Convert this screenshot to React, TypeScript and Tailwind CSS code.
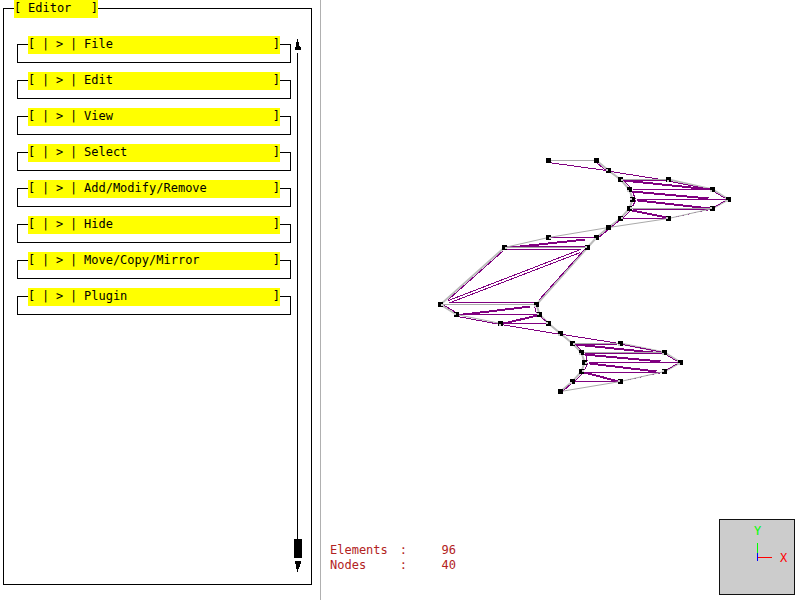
import React from "react";

const MENUS = [
  "File",
  "Edit",
  "View",
  "Select",
  "Add/Modify/Remove",
  "Hide",
  "Move/Copy/Mirror",
  "Plugin",
];

const STATS = [
  { label: "Elements", value: 96 },
  { label: "Nodes", value: 40 },
];

type Segment = [number, number, number, number];

// Node position, followed by the corner that an outline covers
type MeshNode = [number, number, ("nw" | "ne" | "sw" | "se" | "s")?];

const NODES: MeshNode[] = [
  [548, 160], [596, 160], [608, 170, "nw"], [620, 179, "se"], [668, 179, "s"],
  [629, 189, "sw"], [712, 189, "sw"], [632, 199, "nw"], [728, 199, "sw"],
  [629, 208, "ne"], [712, 208, "nw"], [620, 218, "ne"], [668, 218, "nw"],
  [608, 227], [548, 237, "se"], [596, 237, "sw"], [504, 247, "se"],
  [587, 247, "nw"], [440, 304, "se"], [536, 304, "sw"], [456, 314, "nw"],
  [539, 314, "nw"], [500, 323, "s"], [548, 323, "nw"], [560, 333, "sw"],
  [572, 343, "se"], [620, 343, "sw"], [581, 352, "sw"], [664, 352, "sw"],
  [584, 362, "se"], [680, 362, "sw"], [581, 371, "ne"], [664, 371, "nw"],
  [572, 381, "sw"], [620, 381, "nw"], [560, 391],
];

const NOTCH = {
  nw: [-2, -1],
  ne: [1, -1],
  sw: [-2, 1],
  se: [1, 0],
  s: [-1, 1],
};

const EDGES: Segment[] = [
  [548, 162, 606, 170], [597, 163, 608, 172], [610, 171, 667, 180],
  [670, 181, 710, 189], [623, 180, 664, 180], [632, 189, 712, 189],
  [636, 199, 725, 199], [632, 209, 710, 209], [622, 218, 665, 218],
  [624, 181, 631, 188], [632, 191, 635, 199], [635, 200, 632, 206],
  [630, 210, 622, 218], [619, 220, 610, 227], [608, 229, 598, 237],
  [715, 192, 725, 198], [725, 200, 715, 206],
  [548, 237, 594, 237], [506, 246, 585, 246], [506, 249, 580, 249],
  [503, 250, 448, 299], [448, 300, 580, 249], [450, 302, 580, 252],
  [584, 249, 538, 300], [448, 302, 535, 302], [457, 314, 537, 314],
  [500, 323, 547, 323], [444, 305, 457, 313], [457, 316, 500, 324],
  [500, 324, 560, 334], [534, 306, 536, 313], [541, 317, 547, 322],
  [562, 334, 619, 343], [622, 344, 663, 352], [575, 344, 616, 344],
  [584, 353, 662, 353], [588, 362, 677, 362], [584, 372, 660, 372],
  [574, 381, 617, 381], [576, 345, 583, 352], [585, 354, 587, 361],
  [587, 363, 584, 370], [582, 373, 574, 381], [571, 383, 562, 391],
  [667, 355, 677, 361], [677, 363, 667, 369],
];

const DIAGONALS: Segment[] = [
  [623, 180, 710, 189], [632, 191, 708, 198], [637, 200, 709, 208],
  [632, 210, 666, 217], [510, 247, 585, 239], [463, 314, 530, 306],
  [503, 323, 537, 315], [575, 344, 662, 353], [584, 354, 660, 361],
  [589, 363, 656, 371], [584, 372, 618, 381],
];

const HIDDEN: Segment[] = [[676, 216, 712, 209], [628, 379, 664, 372]];

const THICK_OUTLINES = [
  "596,160 608,170 620,179 629,189 632,199 629,208 620,218 608,227 596,237 587,247 536,304 539,314 548,323 560,333 572,343 581,352 584,362 581,371 572,381 560,391",
  "668,179 712,189 728,199 712,208",
  "504,247 440,304 456,314",
  "620,343 664,352 680,362 664,371",
];

const THIN_OUTLINES = [
  "548,160 596,160",
  "620,179 668,179",
  "712,208 668,218 608,227 548,237 504,247",
  "456,314 500,323",
  "504,247 587,247",
  "440,304 536,304",
  "572,343 620,343",
  "664,371 620,381 560,391",
  "629,208 712,208",
  "581,352 664,352",
];

function Lines({ segments }: { segments: Segment[] }) {
  return (
    <>
      {segments.map(([x1, y1, x2, y2]) => (
        <line key={`${x1},${y1},${x2},${y2}`} x1={x1} y1={y1} x2={x2} y2={y2} />
      ))}
    </>
  );
}

function Mesh() {
  return (
    <svg
      viewBox="430 150 310 250"
      width="310"
      height="250"
      role="img"
      aria-label="Mesh"
      shapeRendering="crispEdges"
    >
      <g transform="translate(0.5 0.5)">
        <g fill="none" stroke="#bbbbbb" strokeWidth="2" shapeRendering="auto">
          {THICK_OUTLINES.map((points) => (
            <polyline key={points} points={points} />
          ))}
        </g>
        <g stroke="#800080" strokeWidth="1">
          <Lines segments={EDGES} />
          <g strokeWidth="2">
            <Lines segments={DIAGONALS} />
          </g>
          <g strokeDasharray="2 4">
            <Lines segments={HIDDEN} />
          </g>
        </g>
        <g fill="none" stroke="#aaaaaa" strokeWidth="1" shapeRendering="auto">
          {THIN_OUTLINES.map((points) => (
            <polyline key={points} points={points} />
          ))}
        </g>
      </g>
      {NODES.map(([x, y, corner]) => (
        <g key={`${x},${y}`}>
          <rect x={x - 2} y={y - 2} width="5" height="5" fill="#000" />
          {corner && (
            <rect
              x={x + NOTCH[corner][0]}
              y={y + NOTCH[corner][1]}
              width="2"
              height="2"
              fill="#ccc"
            />
          )}
        </g>
      ))}
    </svg>
  );
}

function MenuItem({ name }: { name: string }) {
  return (
    <fieldset className="h-[27px] border border-black px-[10px]">
      <legend className="h-[17px] w-full">
        <button type="button" className="flex h-[18px] w-full bg-[#ffff00] text-left">
          <span className="w-[14px]">[</span>
          <span className="w-[14px]">|</span>
          <span className="w-[14px]">&gt;</span>
          <span className="w-[14px]">|</span>
          <span className="grow">{name}</span>
          <span>]</span>
        </button>
      </legend>
    </fieldset>
  );
}

function ScrollTrack() {
  return (
    <div className="flex w-2 shrink-0 flex-col pt-[3px]">
      <button type="button" aria-label="Scroll up" className="ml-px h-[11px] w-[6px]">
        <svg width="6" height="11" viewBox="0 0 6 11" shapeRendering="crispEdges">
          <path d="M2 0h1v3h1v4h1v1h1v3H0V8h1V3h1z" />
        </svg>
      </button>
      <div className="mt-[3px] ml-[3px] w-px grow bg-black" />
      <div className="h-[19px] w-2 bg-black" />
      <button type="button" aria-label="Scroll down" className="mt-[3px] ml-px h-[11px] w-[6px]">
        <svg width="6" height="11" viewBox="0 0 6 11" shapeRendering="crispEdges">
          <path d="M0 0h6v3H5v3H4v2H3v3H2V8H1V3H0z" />
        </svg>
      </button>
    </div>
  );
}

function AxisCube() {
  return (
    <svg
      width="76"
      height="76"
      viewBox="0 0 76 76"
      role="img"
      aria-label="View orientation"
      className="font-['DejaVu_Sans_Mono',monospace] text-xs"
    >
      <g shapeRendering="crispEdges">
        <rect x="0.5" y="0.5" width="75" height="75" fill="#cccccc" stroke="#111" />
        <rect x="38" y="24" width="1" height="10" fill="#00ff00" />
        <rect x="38" y="38" width="15" height="1" fill="#ff0000" />
        <rect x="38" y="34" width="1" height="8" fill="#0000ff" />
      </g>
      <text x="35" y="16" fill="#00ff00">Y</text>
      <text x="61" y="43" fill="#ff0000">X</text>
    </svg>
  );
}

export default function App() {
  return (
    <div className="flex h-screen bg-white font-['DejaVu_Sans_Mono','Liberation_Mono',monospace] text-xs leading-4 text-black">
      <aside className="w-80 shrink-0 pr-2 pb-[15px] pl-[3px]">
        <fieldset className="flex h-full border border-black pr-[9px] pl-[13px]">
          <legend className="-ml-[3px] h-[17px]">
            <button type="button" className="flex h-[18px] w-[84px] bg-[#ffff00] text-left">
              <span className="w-[14px]">[</span>
              <span className="grow">Editor</span>
              <span>]</span>
            </button>
          </legend>
          <div className="flex h-full gap-[3px] pt-[19px] pb-3">
            <nav aria-label="Editor" className="flex w-[274px] flex-col gap-[9px]">
              {MENUS.map((name) => (
                <MenuItem key={name} name={name} />
              ))}
            </nav>
            <ScrollTrack />
          </div>
        </fieldset>
      </aside>

      <main className="flex min-w-0 grow flex-col border-l border-[#b0b0b0]">
        <div className="flex min-h-0 grow items-center justify-center pt-[31px] pl-[48px]">
          <Mesh />
        </div>
        <div className="flex shrink-0 items-end justify-between pr-[5px] pb-[5px] pl-[9px]">
          <dl className="pb-[22px] leading-[15px] text-[#b22222]">
            {STATS.map(({ label, value }) => (
              <div key={label} className="flex">
                <dt className="flex w-[77px] justify-between">
                  {label}
                  <span>:</span>
                </dt>
                <dd className="w-[49px] text-right">{value}</dd>
              </div>
            ))}
          </dl>
          <AxisCube />
        </div>
      </main>
    </div>
  );
}
